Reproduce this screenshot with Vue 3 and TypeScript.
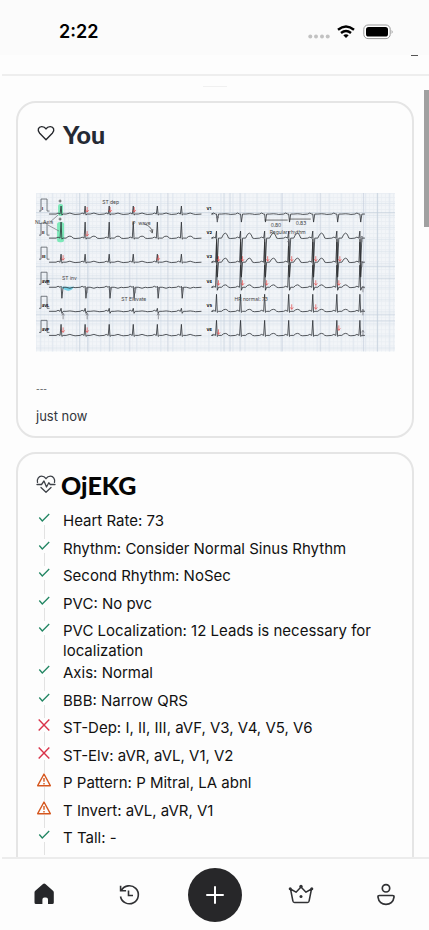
<script setup lang="ts">
type Status = 'ok' | 'bad' | 'warn'

interface Finding {
  label: string
  value: string
  status: Status
}

interface Beat {
  up: number
  down: number
  wave: number
}

const findings: Finding[] = [
  { label: 'Heart Rate', value: '73', status: 'ok' },
  { label: 'Rhythm', value: 'Consider Normal Sinus Rhythm', status: 'ok' },
  { label: 'Second Rhythm', value: 'NoSec', status: 'ok' },
  { label: 'PVC', value: 'No pvc', status: 'ok' },
  { label: 'PVC Localization', value: '12 Leads is necessary for localization', status: 'ok' },
  { label: 'Axis', value: 'Normal', status: 'ok' },
  { label: 'BBB', value: 'Narrow QRS', status: 'ok' },
  { label: 'ST-Dep', value: 'I, II, III, aVF, V3, V4, V5, V6', status: 'bad' },
  { label: 'ST-Elv', value: 'aVR, aVL, V1, V2', status: 'bad' },
  { label: 'P Pattern', value: 'P Mitral, LA abnl', status: 'warn' },
  { label: 'T Invert', value: 'aVL, aVR, V1', status: 'warn' },
  { label: 'T Tall', value: '-', status: 'ok' },
]

const leftBeats = [25, 49, 73, 97, 121, 145]
const rightBeats = [180, 204, 228, 252, 276, 300, 323]

function trace(beats: number[], y: number, start: number, end: number, beat: Beat): string {
  let d = `M${start} ${y}`
  for (const x of beats) {
    d += ` L${x - 5} ${y} l2 -1 l2 1 L${x} ${y - beat.up} L${x + 0.8} ${y + beat.down} L${x + 2} ${y}`
    if (x + 14 < end) d += ` l3 0 q4 ${-beat.wave * 2} 7 0 l2 .4`
  }
  return `${d} L${end} ${y}`
}

const leftLeads = [
  { name: 'I', y: 21, up: 8, down: 1, wave: 1 },
  { name: 'II', y: 45, up: 16, down: 1, wave: 2 },
  { name: 'III', y: 69, up: 8, down: 1, wave: 1 },
  { name: 'aVR', y: 94, up: 1, down: 11, wave: -1 },
  { name: 'aVL', y: 118, up: 3, down: 2, wave: 0.4 },
  { name: 'aVF', y: 142, up: 11, down: 1, wave: 1 },
].map((l) => ({ ...l, path: trace(leftBeats, l.y, 13, 165, l) }))

const rightLeads = [
  { name: 'V1', y: 21, up: 0, down: 8, wave: 0.3 },
  { name: 'V2', y: 45, up: 7, down: 24, wave: 5 },
  { name: 'V3', y: 69, up: 20, down: 15, wave: 4 },
  { name: 'V4', y: 94, up: 22, down: 3, wave: 2.4 },
  { name: 'V5', y: 118, up: 17, down: 1, wave: 2 },
  { name: 'V6', y: 142, up: 15, down: 1, wave: 2 },
].map((l) => ({ ...l, path: trace(rightBeats, l.y, 177, 328, l) }))

const redMarks: [number, number][] = [
  [51, 20], [74, 20], [98, 20], [51, 44], [27, 68], [122, 68],
  [182, 69], [206, 69], [231, 69], [255, 69], [279, 69], [303, 69],
  [182, 93], [206, 93], [230, 93], [279, 93], [302, 93],
  [255, 117], [279, 117], [182, 142], [302, 138], [27, 140], [51, 140],
]

const grayMarks: [number, number][] = [
  [27, 121], [51, 121], [122, 121], [51, 95], [74, 95], [99, 95], [122, 95], [146, 95],
  [181, 24], [252, 48], [325, 44], [325, 69], [326, 94], [326, 117], [326, 138],
]

const darkColumns = [43, 51, 73, 93, 131, 187, 193, 203, 245, 283, 326, 340]
const darkRows = [19, 73, 85, 121, 127]
</script>

<template>
  <div class="app">
    <header class="status">
      <time class="clock">2:22</time>
      <div class="indicators">
        <svg width="22" height="16" viewBox="0 0 22 16" fill="#c2c2c2" aria-hidden="true">
          <circle cx="2.3" cy="12.5" r="2" /><circle cx="8" cy="12.5" r="2" />
          <circle cx="14" cy="12.5" r="2" /><circle cx="19.7" cy="12.5" r="2" />
        </svg>
        <svg class="wifi" width="18" height="14" viewBox="0 0 18 14" fill="none" stroke="#000" stroke-width="2.4" aria-hidden="true">
          <path d="M1 4.7Q9-1.8 17 4.7M4 8Q9 4 14 8" />
          <path d="M6.3 10.3Q9 8.2 11.7 10.3L9 13Z" fill="#000" stroke="none" />
        </svg>
        <svg width="31" height="16" viewBox="0 0 31 16" aria-hidden="true">
          <rect x=".8" y="1" width="26.4" height="13.6" rx="4.2" fill="#fff" stroke="#999" />
          <rect x="3" y="3" width="22" height="9.6" rx="2.6" fill="#000" />
          <path d="M28.7 5.7q1.8 2.1 0 4.2Z" fill="#888" />
        </svg>
      </div>
    </header>
    <div class="topbar"><span class="dash"></span></div>

    <main class="feed">
      <div class="grabber"></div>
      <section class="card">
        <h2 class="title you">
          <svg width="20" height="20" viewBox="0 0 20 20" fill="none" stroke="#26282d" stroke-width="1.4" stroke-linejoin="round" aria-hidden="true">
            <path d="M10 15.700 3.700 9.300C.8 6 2.500 2.700 5.600 2.600 7.600 2.500 9.100 3.400 10 4.900c.9-1.500 2.400-2.400 4.400-2.300 3.100.1 4.800 3.400 1.900 6.700Z" />
          </svg>
          You
        </h2>
        <svg class="ecg" viewBox="0 0 358 158" role="img" aria-label="12-lead ECG">
          <defs>
            <pattern id="fine" width="4" height="4" patternUnits="userSpaceOnUse">
              <path d="M0 .5H4M.5 0V4" stroke="#eaeef3" stroke-width=".8" />
            </pattern>
            <pattern id="coarse" width="12" height="12" patternUnits="userSpaceOnUse">
              <path d="M0 10.5H12M4.5 0V12" stroke="#dbe3eb" stroke-width=".8" />
            </pattern>
          </defs>
          <rect width="358" height="158" fill="#f2f5f8" />
          <rect width="358" height="158" fill="url(#fine)" />
          <rect width="358" height="158" fill="url(#coarse)" />
          <path v-for="x in darkColumns" :key="`c${x}`" :d="`M${x}.5 0v158`" class="rule" />
          <path v-for="y in darkRows" :key="`h${y}`" :d="`M0 ${y}.5h358`" class="rule" />
          <rect x="22" y="11" width="5" height="12" rx="2" fill="#7de8b9" />
          <rect x="21" y="29" width="7" height="20" rx="2.5" fill="#7de8b9" />
          <path d="M26 94h11q-2 3-5 3t-6-3Z" fill="#70cfe5" stroke="#70cfe5" />
          <g v-for="lead in leftLeads" :key="lead.name">
            <path :d="`M3 ${lead.y - 3}h2v-12h6v12h2.500`" class="pulse" />
            <path :d="lead.path" class="trace" />
            <text x="6" :y="lead.y - 4" class="lead">{{ lead.name }}</text>
          </g>
          <g v-for="lead in rightLeads" :key="lead.name">
            <path :d="lead.path" class="trace" />
            <text x="170" :y="lead.y - 4" class="lead">{{ lead.name }}</text>
          </g>
          <path v-for="x in rightBeats" :key="x" :d="`M${x} 46l.5 37`" stroke="#333" stroke-width=".9" />
          <path v-for="([x, y], i) in redMarks" :key="`r${i}`" :d="`M${x} ${y - 6}v5m-1.5-2 1.5 2 1.5-2`" class="mark red" />
          <path v-for="([x, y], i) in grayMarks" :key="`g${i}`" :d="`M${x} ${y + 5}v-6m-1.3 2 1.3-2 1.3 2`" class="mark" />
          <path d="M14 29l8-7M12 32l11 6" class="mark" />
          <path d="M108 31q7 2 8 8m-2.5-2 2.5 3 .5-4M228 27h23m2-1h21" class="mark ink" />
          <path d="M22.5 8h3M24 6.5v3M22.5 26h3M24 24.5v3" class="mark ink" />
          <g class="notes">
            <text x="66" y="11">ST dep</text>
            <text x="-1" y="31">NL Axis</text>
            <text x="96" y="32">P&nbsp; wave</text>
            <text x="26" y="87">ST inv</text>
            <text x="85" y="108">ST Elevate</text>
            <text x="234" y="34">0.80</text>
            <text x="259" y="32">0.83</text>
            <text x="233" y="41">Regular rhythm</text>
            <text x="198" y="108">HR normal: 73</text>
          </g>
        </svg>
        <p class="dots">---</p>
        <p class="when">just now</p>
      </section>

      <section class="card report">
        <h2 class="title">
          <svg width="20" height="20" viewBox="0 0 20 20" fill="none" stroke="#3e4248" stroke-width="1.3" stroke-linejoin="round" stroke-linecap="round" aria-hidden="true">
            <path d="M1.500 7.300C.7 4 2.700 1.200 5.500 1.200c2 0 3.500 1 4.500 2.500 1-1.500 2.500-2.500 4.500-2.500 2.800 0 4.800 2.800 4 6.100M5 12.500 10 17.200 15 12.500M1 9.500h4.500L8 6l2.500 6 2.300-4.300 1.400 1.800H19" />
          </svg>
          OjEKG
        </h2>
        <ul class="list">
          <li v-for="item in findings" :key="item.label" class="row">
            <span class="rail">
              <svg v-if="item.status === 'ok'" width="14" height="14" viewBox="0 0 14 14" fill="none" stroke="#218562" stroke-width="1.3" aria-hidden="true">
                <path d="m2.300 6.500 3 3.500 6.900-7" />
              </svg>
              <svg v-else-if="item.status === 'bad'" width="14" height="14" viewBox="0 0 14 14" fill="none" stroke="#d9344a" stroke-width="1.4" aria-hidden="true">
                <path d="M1.700 1.500 12.300 12.500M12.300 1.500 1.700 12.500" />
              </svg>
              <svg v-else width="14" height="14" viewBox="0 0 14 14" fill="none" stroke="#d5571e" stroke-width="1.4" stroke-linejoin="round" aria-hidden="true">
                <path d="M7 1 13.300 12.700H.7ZM7 5v3.700M7 10v1.400" />
              </svg>
            </span>
            <span class="text">{{ item.label }}: {{ item.value }}</span>
          </li>
        </ul>
      </section>
      <div class="thumb"></div>
    </main>

    <nav class="tabs" aria-label="Main">
      <a href="#home" class="tab" aria-label="Home">
        <svg width="24" height="24" viewBox="0 0 24 24" fill="#26272a">
          <path d="M10 1q1.200-1 2.400 0l7.600 6.700q.8.700.8 1.800v10q0 1.500-1.500 1.500H15v-4.500q0-2-2-2h-1.600q-2 0-2 2V21H3Q1.500 21 1.500 19.500v-10q0-1.100.8-1.800Z" />
        </svg>
      </a>
      <a href="#history" class="tab" aria-label="History">
        <svg width="24" height="24" viewBox="0 0 24 24" fill="none" stroke="#303134" stroke-width="1.6">
          <path d="M2.500 13.500a9 9 0 1 0 .9-6M2.600 2.800v5h5.500M10.500 7.500v5H15" />
        </svg>
      </a>
      <button type="button" class="add" aria-label="Add">
        <svg width="18" height="18" viewBox="0 0 18 18" stroke="#fff" stroke-width="2" stroke-linecap="round">
          <path d="M9 1v16M1 9h16" />
        </svg>
      </button>
      <a href="#premium" class="tab" aria-label="Premium">
        <svg width="26" height="24" viewBox="0 0 26 24" fill="none" stroke="#303134" stroke-width="1.5" stroke-linejoin="round">
          <path d="M2.500 6 8 9.200 13 4l5 5.200L23.500 6l-2.400 12q-.2 1.500-1.600 1.500h-13q-1.400 0-1.600-1.500Z" />
          <g fill="#303134" stroke="none">
            <circle cx="2.200" cy="5.700" r="1.500" /><circle cx="13" cy="3.500" r="1.700" />
            <circle cx="23.800" cy="5.700" r="1.500" /><circle cx="13" cy="13.500" r="1.500" />
          </g>
        </svg>
      </a>
      <a href="#profile" class="tab" aria-label="Profile">
        <svg width="24" height="24" viewBox="0 0 24 24" fill="none" stroke="#303134" stroke-width="1.7" stroke-linejoin="round">
          <circle cx="12" cy="5.300" r="3.700" />
          <path d="M5.500 12.500h13q1.700 0 1.500 1.700c-.6 4.600-4 7.100-8 7.100s-7.400-2.500-8-7.100q-.2-1.700 1.500-1.700Z" />
        </svg>
      </a>
    </nav>
  </div>
</template>

<style>
body {
  margin: 0;
  background: #fdfdfd;
}
</style>

<style scoped>
.app {
  display: flex;
  flex-direction: column;
  height: 100vh;
  overflow: hidden;
  background: #fdfdfd;
  color: #111;
  font-family: Inter, "Noto Sans", sans-serif;
}
.status {
  display: flex;
  flex: none;
  align-items: center;
  justify-content: space-between;
  box-sizing: border-box;
  height: 55px;
  padding: 9px 35px 0 59px;
  background: #fbfbfb;
}
.clock {
  font: 600 18px/24px Inter, sans-serif;
  color: #000;
}
.indicators {
  display: flex;
  align-items: center;
  gap: 7px;
}
.wifi {
  margin-right: 1px;
}
.topbar {
  display: flex;
  flex: none;
  justify-content: flex-end;
  height: 19px;
  margin-left: 2px;
  padding-right: 11px;
  border-bottom: 2px solid #eee;
}
.dash {
  width: 7px;
  height: 1px;
  background: #555;
}
.feed {
  position: relative;
  display: flex;
  flex: 1;
  flex-direction: column;
  gap: 14px;
  min-height: 0;
  padding: 0 15px 0 16px;
  overflow: hidden;
}
.grabber {
  flex: none;
  align-self: center;
  width: 24px;
  height: 1px;
  margin-top: 10px;
  background: #f0f0f0;
}
.thumb {
  position: absolute;
  top: 14px;
  right: 0;
  width: 5px;
  height: 137px;
  background: #a0a0a0;
}
.card {
  flex: none;
  padding: 15px 17px 10px 18px;
  border: 2px solid #e5e5e5;
  border-radius: 20px;
}
.report {
  padding-bottom: 40px;
}
.title {
  display: flex;
  align-items: center;
  gap: 5px;
  margin: 0;
  font: 900 25px/32px Lato, sans-serif;
  color: #050505;
}
.you {
  gap: 7px;
  color: #252a34;
}
.ecg {
  display: block;
  width: 100%;
  margin-top: 43px;
  overflow: visible;
}
.rule {
  stroke: #c6d0dc;
  stroke-width: 0.7;
}
.trace,
.pulse,
.mark {
  fill: none;
  stroke: #2c2f34;
  stroke-width: 0.8;
}
.pulse {
  stroke: #555b63;
}
.mark {
  stroke: #6d6f76;
  stroke-width: 0.7;
}
.red {
  stroke: #e34c4c;
}
.ink {
  stroke: #333;
}
.lead {
  font-size: 4px;
  font-weight: 700;
}
.notes {
  font-size: 5px;
  fill: #444;
}
.dots,
.when {
  margin: 0;
  font-size: 13px;
  line-height: 20px;
  color: #33363c;
}
.dots {
  margin-top: 28px;
  font-size: 8px;
}
.when {
  margin-top: 7px;
}
.list {
  display: grid;
  align-content: stretch;
  min-height: 344px;
  margin: 10px 0 0;
  padding: 0;
  list-style: none;
}
.row {
  display: flex;
  gap: 11px;
  min-height: 27px;
}
.rail {
  display: flex;
  flex: none;
  flex-direction: column;
  align-items: center;
  width: 16px;
}
.rail::after {
  content: "";
  flex: 1;
  width: 1px;
  background: #e2e2e2;
}
.text {
  padding-bottom: 2px;
  font-size: 15px;
  line-height: 20px;
}
.tabs {
  display: grid;
  flex: none;
  grid-template-columns: repeat(5, 1fr);
  place-items: center;
  height: 71px;
  margin-left: 2px;
  border-top: 2px solid #ececec;
}
.tab {
  display: flex;
}
.add {
  display: grid;
  place-items: center;
  width: 54px;
  height: 54px;
  padding: 0;
  border: 0;
  border-radius: 50%;
  background: #272729;
}
</style>
